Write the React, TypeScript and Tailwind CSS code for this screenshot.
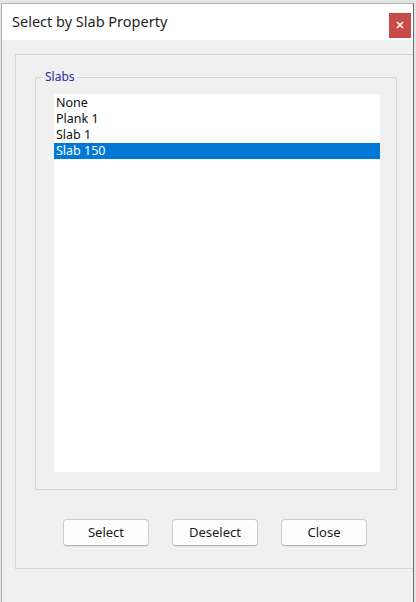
const items = ['None', 'Plank 1', 'Slab 1', 'Slab 150'];

export default function App() {
  const selected = 'Slab 150';

  return (
    <div
      className="w-[416px] h-[602px] overflow-hidden bg-[#e4e4e4] pt-[3px] pl-[1px] pr-[2px]"
      style={{ fontFamily: '"Noto Sans", "Open Sans", sans-serif' }}
    >
      <div className="h-[620px] flex flex-col bg-[#f0f0f0] border border-[#b4b4b4] border-r-[#6b6b6b]">
        {/* Title bar */}
        <div className="h-[36px] shrink-0 bg-white flex items-center justify-between pl-[10px] pr-[2px]">
          <span className="text-[14.5px] text-[#1f1f1f]">Select by Slab Property</span>
          <button className="w-[22px] h-[25px] mt-[6px] bg-[#c94b49] flex items-center justify-center">
            <svg width="8" height="8" viewBox="0 0 8 8">
              <path d="M1 1 L7 7 M7 1 L1 7" stroke="white" strokeWidth="1.6" />
            </svg>
          </button>
        </div>

        {/* Body */}
        <div className="flex-1 pt-[14px] pl-[13px]">
          <div className="h-[515px] border-t border-l border-b border-[#d6d6d6] pt-[22px] pl-[19px]">
            {/* Group box */}
            <div className="relative w-[362px] h-[413px] border border-[#d6d6d6] pt-[16px] pl-[18px]">
              <span className="absolute left-[7px] top-[-9px] px-[2px] bg-[#f0f0f0] text-[12px] leading-[16px] text-[#2b2ba3]">
                Slabs
              </span>
              <div className="w-[326px] h-[378px] bg-white pt-[1px]">
                {items.map((item) => (
                  <div
                    key={item}
                    className={
                      item === selected
                        ? 'h-[16px] pl-[2px] text-[12.5px] leading-[16px] bg-[#0078d7] text-white'
                        : 'h-[16px] pl-[2px] text-[12.5px] leading-[16px] text-[#111]'
                    }
                  >
                    {item}
                  </div>
                ))}
              </div>
            </div>

            {/* Buttons */}
            <div className="flex gap-[23px] mt-[29px] ml-[28px]">
              {['Select', 'Deselect', 'Close'].map((label) => (
                <button
                  key={label}
                  className="w-[86px] h-[27px] rounded-[4px] border border-[#cdcdcd] border-b-[#b5b5b5] bg-[#fdfdfd] text-[13px] text-[#1b1b1b] shadow-[0_1px_0_rgba(0,0,0,0.05)]"
                >
                  {label}
                </button>
              ))}
            </div>
          </div>
        </div>
      </div>
    </div>
  );
}
